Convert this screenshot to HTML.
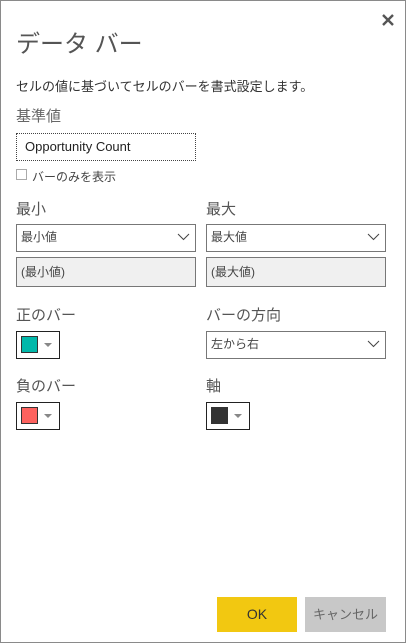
<!DOCTYPE html>
<html><head><meta charset="utf-8"><style>
*{margin:0;padding:0;box-sizing:border-box}
body{width:407px;height:644px;background:#fff;position:relative;overflow:hidden;font-family:"Liberation Sans","Noto Sans CJK JP",sans-serif;color:#333}
.frame{position:absolute;left:0;top:0;width:406px;height:643px;border:1px solid #8a8a8a}
.a{position:absolute;white-space:nowrap}
.box{position:absolute;border:1px solid #777;background:#fff;font-size:12px;color:#444;padding-left:4px;line-height:25px}
.chev{position:absolute;right:5px;top:8px}
.sw{position:absolute;left:4px;top:4px;width:17px;height:17px;border:1px solid #333}
.tri{position:absolute;left:27px;top:11px;width:0;height:0;border-left:4px solid transparent;border-right:4px solid transparent;border-top:4px solid #888}
.lbl{font-size:15px;color:#555}
</style></head><body>
<div class="frame"></div>
<div class="a" style="left:16px;top:24px;font-size:24px;color:#555">データ バー</div>
<svg class="a" style="left:382px;top:14px" width="12" height="12"><path d="M1 1L11 11M11 1L1 11" stroke="#555" stroke-width="2.4"/></svg>
<div class="a" style="left:16px;top:76px;font-size:13px;color:#333">セルの値に基づいてセルのバーを書式設定します。</div>
<div class="a lbl" style="left:16px;top:105px;color:#666">基準値</div>
<div class="box" style="left:16px;top:133px;width:180px;height:28px;border:1px dotted #444;font-size:13px;color:#222;padding-left:8px;line-height:26px">Opportunity Count</div>
<div class="a" style="left:16px;top:169px;width:11px;height:11px;border:1px solid #aaa"></div>
<div class="a" style="left:32px;top:168px;font-size:12px;color:#444">バーのみを表示</div>
<div class="a lbl" style="left:16px;top:198px">最小</div>
<div class="a lbl" style="left:206px;top:198px">最大</div>
<div class="box" style="left:16px;top:224px;width:180px;height:28px">最小値<svg class="chev" width="13" height="8"><path d="M1 1L6.5 6.5L12 1" fill="none" stroke="#444"/></svg></div>
<div class="box" style="left:206px;top:224px;width:180px;height:28px">最大値<svg class="chev" width="13" height="8"><path d="M1 1L6.5 6.5L12 1" fill="none" stroke="#444"/></svg></div>
<div class="box" style="left:16px;top:257px;width:180px;height:30px;background:#f0f0f0;line-height:28px">(最小値)</div>
<div class="box" style="left:206px;top:257px;width:180px;height:30px;background:#f0f0f0;line-height:28px">(最大値)</div>
<div class="a lbl" style="left:16px;top:304px">正のバー</div>
<div class="a lbl" style="left:206px;top:304px">バーの方向</div>
<div class="box" style="left:16px;top:331px;width:44px;height:28px;border-color:#222"><div class="sw" style="background:#01b8aa"></div><div class="tri"></div></div>
<div class="box" style="left:206px;top:331px;width:180px;height:28px">左から右<svg class="chev" width="13" height="8"><path d="M1 1L6.5 6.5L12 1" fill="none" stroke="#444"/></svg></div>
<div class="a lbl" style="left:16px;top:375px">負のバー</div>
<div class="a lbl" style="left:206px;top:375px">軸</div>
<div class="box" style="left:16px;top:402px;width:44px;height:28px;border-color:#222"><div class="sw" style="background:#fd625e"></div><div class="tri"></div></div>
<div class="box" style="left:206px;top:402px;width:44px;height:28px;border-color:#222"><div class="sw" style="background:#333"></div><div class="tri"></div></div>
<div class="a" style="left:217px;top:597px;width:80px;height:35px;background:#f2c811;font-size:14px;color:#333;text-align:center;line-height:35px">OK</div>
<div class="a" style="left:305px;top:597px;width:81px;height:35px;background:#c8c8c8;font-size:13px;color:#666;text-align:center;line-height:35px">キャンセル</div>
</body></html>
